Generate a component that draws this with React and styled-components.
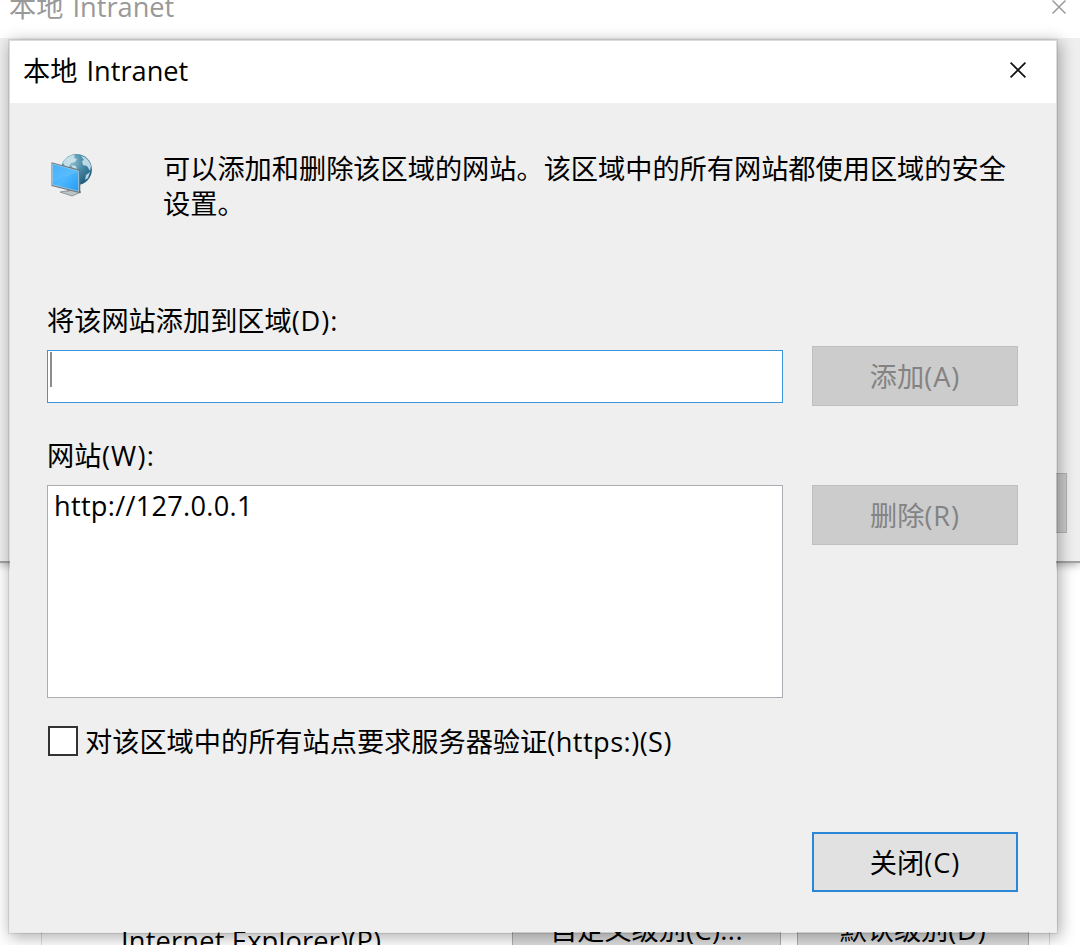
import React from 'react';
import styled, { createGlobalStyle } from 'styled-components';

const GlobalStyle = createGlobalStyle`
  * { box-sizing: border-box; }
  body {
    margin: 0;
    background: #fff;
    color: #000;
    font: 27.2px/35px "Open Sans", "Noto Sans CJK SC", sans-serif;
    overflow: hidden;
  }
`;

const Desktop = styled.div`
  position: relative;
  display: flex;
  flex-direction: column;
  width: 1080px;
  height: 945px;
  overflow: hidden;
  background: #fff;
`;

const ParentWindow = styled.section`
  display: flex;
  flex-direction: column;
  height: 563px;
  background: #efefef;
  border-bottom: 2px solid #a2a2a2;
  box-shadow: 0 2px 8px rgba(0, 0, 0, 0.3);
`;

const ParentTitle = styled.header`
  display: flex;
  justify-content: space-between;
  align-items: flex-start;
  height: 38px;
  padding: 0 14px 0 9px;
  background: #fff;
  color: #999;
  overflow: hidden;

  > span { margin-top: -11px; white-space: nowrap; }
`;

const ParentBody = styled.div`
  display: flex;
  justify-content: flex-end;
  padding: 435px 13px 0 0;
`;

const HiddenButton = styled.div`
  width: 206px;
  height: 60px;
  background: #ccc;
  border: 1px solid #b4b4b4;
`;

const OptionsPane = styled.section`
  display: flex;
  flex: 1;
  align-items: flex-end;
  margin: 0 30px 0 41px;
  border: solid #dcdcdc;
  border-width: 0 1px;
  padding-left: 79px;
`;

const OptionText = styled.div`
  width: 391px;
  height: 22px;
  white-space: nowrap;
  line-height: 35px;
`;

const OptionButton = styled.div`
  width: ${(p) => p.$width}px;
  height: 46px;
  margin-right: 16px;
  flex: none;
  background: #ddd;
  border: 1px solid #adadad;
  border-bottom: 0;
  text-align: center;
  padding-top: 12px;
  line-height: 35px;
  white-space: nowrap;
`;

const Dialog = styled.section`
  position: absolute;
  left: 8px;
  top: 39px;
  width: 1050px;
  height: 895px;
  background: #efefef;
  background-clip: padding-box;
  border: 2px solid rgba(0, 0, 0, 0.08);
  box-shadow: 2px 3px 15px rgba(0, 0, 0, 0.33);
`;

const TitleBar = styled.header`
  display: flex;
  justify-content: space-between;
  align-items: center;
  height: 62px;
  padding: 0 30px 3px 13px;
  background: #fff;

  svg { margin-bottom: 2px; }
`;

const Latin = styled.span`
  letter-spacing: ${(p) => p.$spacing}px;
  margin-left: ${(p) => p.$gap || 0}px;
`;

const Cross = styled.svg`
  width: ${(p) => p.$size}px;
  height: ${(p) => p.$size}px;
  stroke: ${(p) => p.$color};
  stroke-width: 1.7;
  fill: none;
`;

const Content = styled.div`
  padding: 48px 38px 0 37px;
`;

const Intro = styled.div`
  display: flex;
  height: 152px;

  p {
    margin: 0 0 0 72px;
    white-space: nowrap;
  }
`;

const ZoneIcon = styled.svg`
  width: 44px;
  height: 46px;
  margin-left: 2px;
  margin-right: -2px;
`;

const Label = styled.div`
  height: ${(p) => p.$height}px;
  white-space: nowrap;
`;

const Row = styled.div`
  display: flex;
  justify-content: space-between;
  align-items: ${(p) => p.$align || 'flex-start'};
`;

const UrlInput = styled.div`
  width: 736px;
  height: 53px;
  padding: 1px 2px;
  background: #fff;
  border: 1px solid #3a96dd;
`;

const Caret = styled.div`
  width: 2px;
  height: 35px;
  background: #8c8c8c;
`;

const SiteList = styled.div`
  width: 736px;
  height: 213px;
  padding: 2px 6px;
  background: #fff;
  border: 1px solid #abadb3;
`;

const Button = styled.div`
  display: flex;
  align-items: center;
  justify-content: center;
  width: 206px;
  height: 60px;
  color: ${(p) => (p.$disabled ? '#838383' : '#000')};
  background: ${(p) => (p.$disabled ? '#ccc' : '#e1e1e1')};
  border: ${(p) => (p.$disabled ? '1px solid #bfbfbf' : '2px solid #2a86d6')};
`;

const AddSection = styled.div`
  height: 135px;
`;

const CheckRow = styled.div`
  display: flex;
  align-items: center;
  gap: 7px;
  height: 35px;
  margin-top: 25px;
  padding-left: 1px;
  white-space: nowrap;

  > span:last-child { padding-top: 2px; }
`;

const CheckBox = styled.span`
  width: 30px;
  height: 30px;
  background: #fff;
  border: 2px solid #333;
`;

const Footer = styled.footer`
  display: flex;
  justify-content: flex-end;
  margin-top: 74px;
`;

const CloseMark = ({ size, color }) => (
  <Cross $size={size} $color={color} viewBox="0 0 16 16">
    <path d="M.6.6 15.4 15.4M15.4.6.6 15.4" />
  </Cross>
);

const IntranetIcon = () => (
  <ZoneIcon viewBox="0 0 44 46">
    <defs>
      <radialGradient id="globe" cx=".35" cy=".25" r=".8">
        <stop offset="0" stopColor="#92bfd0" />
        <stop offset=".5" stopColor="#4389a6" />
        <stop offset="1" stopColor="#1d5b7c" />
      </radialGradient>
      <linearGradient id="screen" x1="0" y1="0" x2="1" y2="1">
        <stop offset="0" stopColor="#35a8f5" />
        <stop offset=".5" stopColor="#4db7ff" />
        <stop offset="1" stopColor="#239cf4" />
      </linearGradient>
    </defs>
    <circle cx="27.5" cy="18.5" r="15.4" fill="url(#globe)" />
    <path d="M14 12c2-5 7-8 12-8l-1 3 3 1-2 3-4 1-2 4-4-1zM32 5c5 1 9 5 10 10l-1 5-3-5-4-1-1-4 2-1zM22 14l5 1 1 3-4-1zM37 24l4-3-2 6-3 2z" fill="#d4e8ee" opacity=".85" />
    <path d="M19 35v6M17 40l-6 1 12 4 9-4-6-2z" fill="#bdc4c8" stroke="#7d878d" strokeWidth=".8" />
    <path d="M2.5 11.2 31.3 19v23.2L2.5 35z" fill="#68747b" />
    <path d="M3.5 12.8 29.5 20v20.3L3.5 33.8z" fill="url(#screen)" stroke="#c0dcea" strokeWidth=".6" />
    <path d="M4 13.4 29 20.3v1L4 31z" fill="#7acbff" opacity=".25" />
  </ZoneIcon>
);

export default function App() {
  return (
    <>
      <GlobalStyle />
      <Desktop>
        <ParentWindow>
          <ParentTitle>
            <span>本地<Latin $spacing={0} $gap={2}> Intranet</Latin></span>
            <CloseMark size={14} color="#999" />
          </ParentTitle>
          <ParentBody>
            <HiddenButton />
          </ParentBody>
        </ParentWindow>
        <OptionsPane>
          <OptionText><Latin $spacing={0.2}>Internet Explorer)(P)</Latin></OptionText>
          <OptionButton $width={269}>自定义级别<Latin $spacing={0.4}>(C)...</Latin></OptionButton>
          <OptionButton $width={232}>默认级别<Latin $spacing={0.8}>(D)</Latin></OptionButton>
        </OptionsPane>

        <Dialog>
          <TitleBar>
            <span>本地<Latin $spacing={0} $gap={2}> Intranet</Latin></span>
            <CloseMark size={16} color="#111" />
          </TitleBar>
          <Content>
            <Intro>
              <IntranetIcon />
              <p>
                可以添加和删除该区域的网站。该区域中的所有网站都使用区域的安全
                <br />
                设置。
              </p>
            </Intro>
            <AddSection>
              <Label $height={43}>将该网站添加到区域<Latin $spacing={0.9}>(D):</Latin></Label>
              <Row $align="center">
                <UrlInput>
                  <Caret />
                </UrlInput>
                <Button $disabled><span>添加<Latin $spacing={0.9}>(A)</Latin></span></Button>
              </Row>
            </AddSection>
            <Label $height={47}>网站<Latin $spacing={1.2} $gap={0.5}>(W):</Latin></Label>
            <Row>
              <SiteList><Latin $spacing={0.27}>http://127.0.0.1</Latin></SiteList>
              <Button $disabled><span>删除<Latin $spacing={0.9}>(R)</Latin></span></Button>
            </Row>
            <CheckRow>
              <CheckBox />
              <span>对该区域中的所有站点要求服务器验证<Latin $spacing={0.45}>(https:)(S)</Latin></span>
            </CheckRow>
            <Footer>
              <Button><span>关闭<Latin $spacing={0.9}>(C)</Latin></span></Button>
            </Footer>
          </Content>
        </Dialog>
      </Desktop>
    </>
  );
}
